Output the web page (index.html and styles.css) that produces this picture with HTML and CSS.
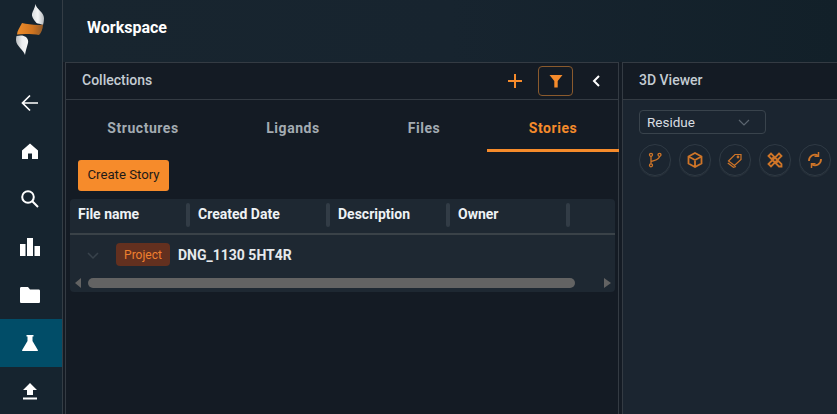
FILE: index.html
```html
<!DOCTYPE html>
<html lang="en">
<head>
<meta charset="utf-8">
<title>Workspace</title>
<link rel="stylesheet" href="styles.css">
</head>
<body>
<div class="app">
  <nav class="sidebar">
    <div class="logo">
      <svg width="34" height="52" viewBox="0 0 34 52">
        <defs>
          <linearGradient id="lg1" x1="0" y1="0" x2="1" y2="0"><stop offset="0" stop-color="#d9dcde"/><stop offset=".5" stop-color="#f4f5f6"/><stop offset="1" stop-color="#b3b8bc"/></linearGradient>
          <linearGradient id="lg2" x1="0" y1="0" x2="1" y2="0"><stop offset="0" stop-color="#b9bdc0"/><stop offset=".5" stop-color="#eceef0"/><stop offset="1" stop-color="#f6f7f7"/></linearGradient>
          <linearGradient id="lg3" x1="0" y1="0" x2="1" y2="0"><stop offset="0" stop-color="#ee8d2c"/><stop offset=".6" stop-color="#d0741f"/><stop offset="1" stop-color="#8f5a2a"/></linearGradient>
        </defs>
        <path d="M20.500 0C21 5 29 8 29 14C29 17 28.500 19 28 21C25 20 23 19.500 21.500 19C18 15 16.500 12 17 10C17.500 7 20 4 20.500 0Z" fill="url(#lg1)"/>
        <path d="M7 19C13 20 22 22 28 20.500C28 25 26 29 24 31C18 30 9 29.500 2 30.500C2 27 5 23 7 19Z" fill="url(#lg3)"/>
        <path d="M1.500 32C6 31 9 31.500 11 33C13 35 13.500 37 13 39C12 43 10.500 47 10 51C9 46 1 42 1 36C1 34.500 1.200 33 1.500 32Z" fill="url(#lg2)"/>
      </svg>
    </div>
    <a class="nav-item">
      <svg width="20" height="20" viewBox="0 0 20 20" fill="none" stroke="#fff" stroke-width="1.700"><path d="M18 10H3M10 2.500L2.500 10L10 17.500"/></svg>
    </a>
    <a class="nav-item">
      <svg width="18" height="18" viewBox="0 0 18 18" fill="#fff"><path d="M9 1.500L1 8.500V17H7V11.500H11V17H17V8.500Z"/></svg>
    </a>
    <a class="nav-item">
      <svg width="20" height="20" viewBox="0 0 20 20" fill="none" stroke="#fff" stroke-width="2"><circle cx="8" cy="8" r="5.800"/><path d="M12.300 12.300L18 18"/></svg>
    </a>
    <a class="nav-item">
      <svg width="20" height="20" viewBox="0 0 20 20" fill="#fff"><path d="M0 7H5.500V19H0ZM7 1H13V19H7ZM14.500 9H20V19H14.500Z"/></svg>
    </a>
    <a class="nav-item">
      <svg width="20" height="16" viewBox="0 0 20 16" fill="#fff"><path d="M1.500 0H8L10 2.500H18.500C19.500 2.500 20 3 20 4V14.500C20 15.500 19.500 16 18.500 16H1.500C.5 16 0 15.500 0 14.500V1.500C0 .5.500 0 1.500 0Z"/></svg>
    </a>
    <a class="nav-item active">
      <svg width="18" height="18" viewBox="0 0 18 18" fill="#fff"><path d="M5.500 1H12.500V2.500H11.500V7L16.800 16C17.200 16.800 16.800 17 16 17H2C1.200 17 .8 16.800 1.200 16L6.500 7V2.500H5.500Z"/></svg>
    </a>
    <a class="nav-item">
      <svg width="16" height="18" viewBox="0 0 16 18" fill="#fff"><path d="M8 1L15 8H11V13H5V8H1ZM1 15.500H15V17.500H1Z"/></svg>
    </a>
  </nav>
  <div class="main">
    <header class="topbar">Workspace</header>
    <div class="panels">
      <section class="panel collections">
        <div class="panel-head">
          <h2 class="panel-title">Collections</h2>
          <div class="head-actions">
            <svg class="act-plus" width="16" height="16" viewBox="0 0 16 16" stroke="#f68b2b" stroke-width="2"><path d="M8 1V15M1 8H15"/></svg>
            <button class="filter-btn">
              <svg width="14" height="14" viewBox="0 0 14 14" fill="#f68b2b"><path d="M.5 1H13.500L8.700 7V13.500H5.300V7Z"/></svg>
            </button>
            <svg class="act-back" width="10" height="14" viewBox="0 0 10 14" fill="none" stroke="#fff" stroke-width="2"><path d="M8 2L3 7L8 12"/></svg>
          </div>
        </div>
        <div class="tabs">
          <div class="tab">Structures</div>
          <div class="tab">Ligands</div>
          <div class="tab tab-files">Files</div>
          <div class="tab current">Stories</div>
        </div>
        <div class="tab-body">
          <button class="create-btn">Create Story</button>
          <div class="table">
            <div class="thead">
              <div class="th w120">File name</div>
              <div class="th w140">Created Date</div>
              <div class="th w120">Description</div>
              <div class="th w120">Owner</div>
            </div>
            <div class="trow">
              <svg class="row-chevron" width="12" height="8" viewBox="0 0 12 8" fill="none" stroke="#38424b" stroke-width="1.500"><path d="M1 1L6 6L11 1"/></svg>
              <span class="badge">Project</span>
              <span class="row-name">DNG_1130 5HT4R</span>
            </div>
            <div class="hscroll">
              <span class="arrow-left"></span>
              <div class="track"><div class="thumb"></div></div>
              <span class="arrow-right"></span>
            </div>
          </div>
        </div>
      </section>
      <section class="panel viewer">
        <div class="panel-head">
          <h2 class="panel-title">3D Viewer</h2>
        </div>
        <div class="viewer-body">
          <div class="select">
            <span>Residue</span>
            <svg width="12" height="7" viewBox="0 0 12 7" fill="none" stroke="#5c6670" stroke-width="1.200"><path d="M1 1L6 6L11 1"/></svg>
          </div>
          <div class="tools">
            <span class="tool"><svg width="16" height="16" viewBox="0 0 16 16" fill="none" stroke="#cf7528" stroke-width="1.300"><circle cx="4" cy="2.800" r="1.500"/><circle cx="12.500" cy="2.800" r="1.500"/><circle cx="4" cy="13.300" r="1.500"/><path d="M4 4.300V11.800M12.500 4.300C12.500 8 8 8 4 9.500"/></svg></span>
            <span class="tool"><svg width="16" height="16" viewBox="0 0 16 16" fill="none" stroke="#cf7528" stroke-width="1.800"><path d="M8 1L14.500 4.500V11.500L8 15L1.500 11.500V4.500ZM1.500 4.500L8 8L14.500 4.500M8 8V15"/></svg></span>
            <span class="tool"><svg width="16" height="16" viewBox="0 0 16 16" fill="none" stroke="#cf7528" stroke-width="1.200"><path d="M1.500 9L8 2.500H14V7.500L7.500 13.500ZM.8 11L6.500 15.300L9 14.500"/><circle cx="11" cy="5" r=".8"/></svg></span>
            <span class="tool"><svg width="16" height="16" viewBox="0 0 16 16" fill="none" stroke="#cf7528" stroke-width="1.800"><path d="M1.500 4L4 1.500L14.500 12V14.500H12ZM12 1.500L14.500 4L4 14.500L1.500 12ZM5 7L7 5M9 11L11 9"/></svg></span>
            <span class="tool"><svg width="16" height="18" viewBox="0 0 16 18" fill="none" stroke="#cf7528" stroke-width="1.800"><path d="M2 10A6 6 0 0 1 11 4.500M14 8A6 6 0 0 1 5 13.500"/><path d="M11.500 1V5.300H7.500M4.500 17V12.700H8.500" stroke-width="1.500"/></svg></span>
          </div>
        </div>
      </section>
    </div>
  </div>
</div>
</body>
</html>
```
FILE: styles.css
```css
* { box-sizing: border-box; }
html, body { margin: 0; height: 100%; overflow: hidden; }
body { font-family: Roboto, "Liberation Sans", sans-serif; background: #1b2631; color: #fff; }
.app { display: flex; width: 837px; height: 414px; }

.sidebar { width: 63px; flex: none; display: flex; flex-direction: column; overflow: hidden; background: #16242f; border-right: 1px solid #343d45; }
.logo { height: 79px; flex: none; padding: 4px 0 0 15px; }
.logo svg { display: block; }
.nav-item { height: 48px; flex: none; display: flex; align-items: center; justify-content: center; padding-right: 2px; }
.nav-item.active { background: #014d68; }

.main { flex: 1; min-width: 0; display: flex; flex-direction: column; background: #1a2530; }
.topbar { height: 62px; flex: none; padding: 18px 0 0 24px; font-size: 16px; font-weight: 700; line-height: 20px; background: linear-gradient(90deg, #18252f, #17242f 50%, #122029); }
.panels { flex: 1; display: flex; gap: 3px; padding-left: 2px; min-height: 0; background: #141b24; }

.panel { display: flex; flex-direction: column; border-top: 1px solid #343b43; }
.collections { width: 554px; flex: none; background: #141b24; border-left: 1px solid #343b43; border-right: 1px solid #343b43; }
.viewer { flex: 1; border-left: 1px solid #343b43; }
.panel-head { height: 37px; flex: none; display: flex; align-items: center; justify-content: space-between; border-bottom: 1px solid #343b43; }
.panel-title { margin: 0; padding-bottom: 2px; font-size: 14px; font-weight: 500; color: #c4ccd3; }
.collections .panel-title { padding-left: 16px; }
.viewer .panel-title { padding-left: 16px; }
.head-actions { display: flex; align-items: center; }
.act-plus { margin-right: 15px; }
.filter-btn { width: 35px; height: 30px; display: flex; align-items: center; justify-content: center; padding: 0; background: transparent; border: 1px solid #8a5a2d; border-radius: 4px; }
.act-back { margin: 0 17px 0 18px; }

.tabs { display: grid; grid-template-columns: 154px 146px 121px 132px; height: 52px; flex: none; }
.tab { display: flex; align-items: center; justify-content: center; padding-top: 4px; font-size: 14px; font-weight: 700; letter-spacing: .55px; color: #a3abb2; }
.tab-files { padding-right: 5px; }
.tab.current { color: #f68b2b; border-bottom: 3px solid #f68b2b; padding-top: 7px; }

.tab-body { padding: 8px 3px 0 4px; }
.create-btn { display: block; margin-left: 8px; width: 91px; height: 31px; padding: 0 0 2px; font: 400 13.2px Roboto, sans-serif; color: #1d1a17; background: #f68b2b; border: 0; border-radius: 3px; }
.table { margin-top: 8px; height: 93px; background: #1e2832; border-radius: 4px; }
.thead { display: flex; height: 36px; border-bottom: 2px solid #3a4248; padding-top: 4px; }
.th { position: relative; height: 24px; padding-left: 8px; font-size: 14px; font-weight: 700; line-height: 22px; color: #eef2f5; }
.th::after { content: ""; position: absolute; right: 0; top: 0; width: 4px; height: 24px; border-radius: 2px; background: #323c46; }
.w120 { width: 120px; }
.w140 { width: 140px; }
.trow { height: 43px; display: flex; align-items: center; padding-left: 17px; padding-bottom: 4px; }
.row-chevron { margin-top: 2px; margin-right: 17px; }
.badge { width: 54px; height: 23px; display: flex; align-items: center; justify-content: center; font-size: 12px; color: #f0802f; background: #63301f; border-radius: 4px; }
.row-name { margin-left: 8px; font-size: 14px; font-weight: 700; color: #e6e9ec; }
.hscroll { height: 10px; display: flex; align-items: center; padding: 0 4px 0 5px; }
.track { flex: 1; margin: 0 22px 0 7px; }
.thumb { width: 487px; height: 10px; border-radius: 5px; background: #636363; }
.arrow-left { width: 0; height: 0; border: 5px solid transparent; border-left: 0; border-right: 6px solid #636363; }
.arrow-right { width: 0; height: 0; border: 5px solid transparent; border-right: 0; border-left: 7px solid #636363; }

.viewer-body { flex: 1; background: #1b2530; padding: 10px 0 0 16px; }
.select { width: 127px; height: 24px; display: flex; align-items: center; justify-content: space-between; padding: 0 15px 0 7px; font-size: 13.5px; color: #d8dde1; border: 1px solid #39434c; border-radius: 4px; }
.tools { display: flex; gap: 8px; margin-top: 10px; width: 220px; }
.tool { width: 32px; height: 32px; flex: none; display: flex; align-items: center; justify-content: center; border: 1px solid #2f3a44; border-radius: 50%; box-shadow: 0 1px 1px #2a333c; }
```
